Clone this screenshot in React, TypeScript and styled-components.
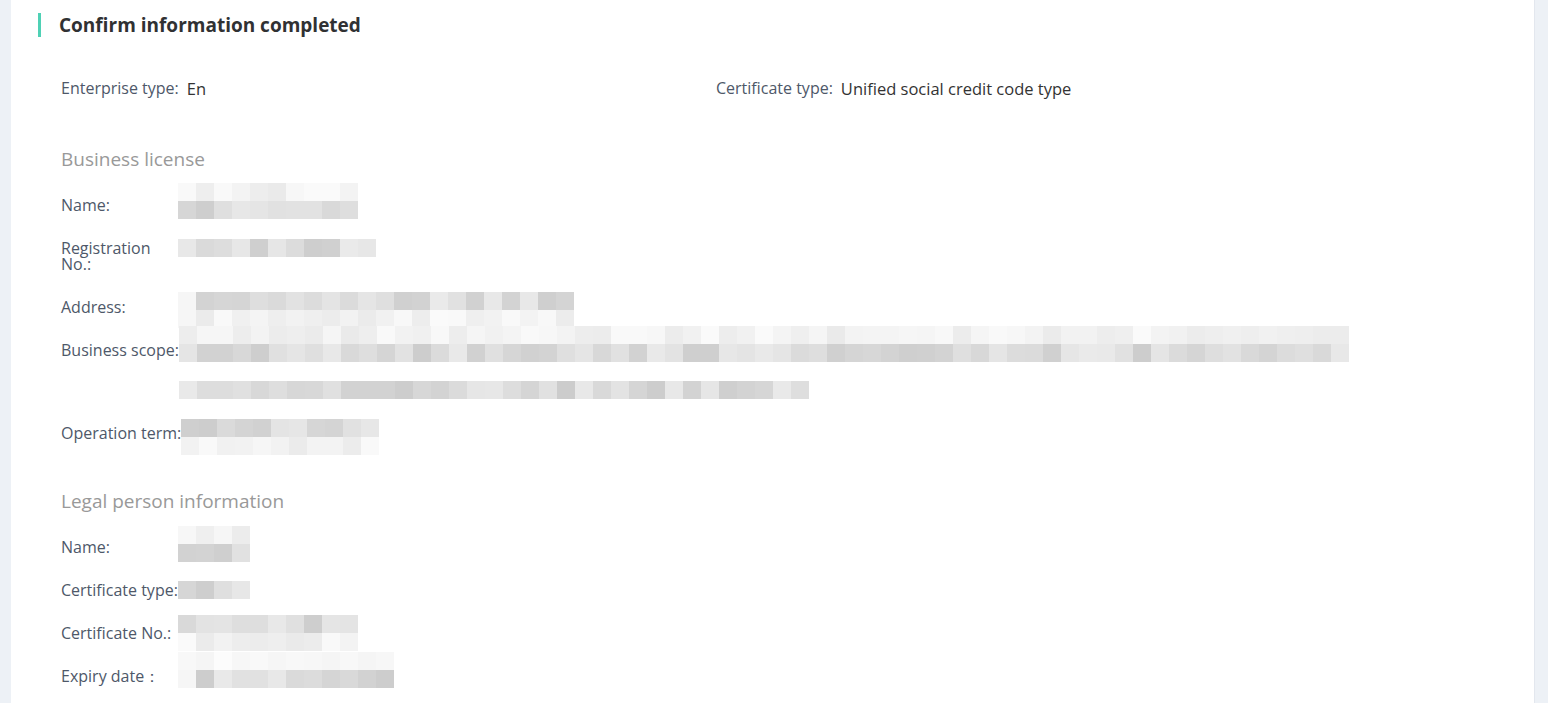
import React from "react";
import styled, { createGlobalStyle } from "styled-components";

const GlobalStyle = createGlobalStyle`
  html, body {
    margin: 0;
    padding: 0;
    background: #edf1f6;
    font-family: "Open Sans", "Noto Sans", Arial, sans-serif;
  }
`;

const Page = styled.div`
  min-height: 703px;
  padding: 0 13px 0 11px;
  box-sizing: border-box;
`;

const Card = styled.div`
  background: #fff;
  min-height: 703px;
  padding: 13px 50px 20px 27px;
  box-sizing: border-box;
  border-right: 1px solid #e3e7ee;
`;

const Title = styled.h2`
  margin: 0;
  display: flex;
  align-items: center;
  gap: 18px;
  font-size: 19px;
  line-height: 24px;
  font-weight: 700;
  color: #303133;
  &::before {
    content: "";
    width: 3px;
    height: 24px;
    background: #4fd1b5;
  }
`;

const Body = styled.div`
  padding-left: 23px;
`;

const TopGrid = styled.div`
  display: grid;
  grid-template-columns: 655px 1fr;
  margin-top: 43px;
`;

const Inline = styled.div`
  font-size: 16px;
  line-height: 17px;
  color: #4e5869;
  display: flex;
  gap: 8px;
`;

const InlineValue = styled.span`
  color: #333;
  font-size: 16.5px;
`;

const Section = styled.section<{ $gap: number }>`
  margin-top: ${(p) => p.$gap}px;
`;

const SectionTitle = styled.h3`
  margin: 0 0 26px;
  font-size: 19px;
  line-height: 24px;
  font-weight: 400;
  color: #999;
`;

const Fields = styled.div`
  display: flex;
  flex-direction: column;
  gap: 27px;
`;

const FieldRow = styled.div`
  display: flex;
  align-items: flex-start;
`;

const Label = styled.div<{ $wrap?: boolean }>`
  flex: 0 0 auto;
  min-width: 117px;
  max-width: ${(p) => (p.$wrap ? "117px" : "none")};
  white-space: ${(p) => (p.$wrap ? "normal" : "nowrap")};
  font-size: 16px;
  line-height: 16px;
  color: #4e5869;
`;

const ValueCol = styled.div`
  display: flex;
  flex-direction: column;
  gap: 24px;
`;

const Mosaic = styled.div<{ $cols: number; $rows: number; $shift: number }>`
  display: grid;
  grid-template-columns: repeat(${(p) => p.$cols}, 18px);
  grid-auto-rows: 18px;
  margin-top: ${(p) => -(p.$rows * 18 - 16) / 2 + p.$shift}px;
  margin-bottom: ${(p) => -(p.$rows * 18 - 16) / 2 - p.$shift}px;
`;

const Cell = styled.span<{ $g: number }>`
  background: rgb(${(p) => p.$g}, ${(p) => p.$g}, ${(p) => p.$g});
`;

type Blur = {
  cols: number;
  tones: [number, number][];
  seed: number;
  shift?: number;
  fade?: number;
};

type FieldData = { label: string; wrap?: boolean; lines: Blur[] };

const rand = (seed: number, i: number) => {
  const x = Math.sin(seed * 97.13 + i * 12.9898) * 43758.5453;
  return x - Math.floor(x);
};

const Pixelated = ({ cols, tones, seed, shift = 0, fade = 0 }: Blur) => {
  const cells: React.ReactNode[] = [];
  tones.forEach(([base, spread], r) => {
    for (let c = 0; c < cols; c++) {
      let g = Math.round(base + rand(seed + r * 7, c) * spread);
      if (c < fade) g = Math.max(g, 246);
      cells.push(<Cell key={`${r}-${c}`} $g={Math.min(g, 252)} />);
    }
  });
  return (
    <Mosaic $cols={cols} $rows={tones.length} $shift={shift}>
      {cells}
    </Mosaic>
  );
};

const Field = ({ label, wrap, lines }: FieldData) => (
  <FieldRow>
    <Label $wrap={wrap}>{label}</Label>
    <ValueCol>
      {lines.map((l, i) => (
        <Pixelated key={i} {...l} />
      ))}
    </ValueCol>
  </FieldRow>
);

const light: [number, number] = [234, 16];
const dark: [number, number] = [204, 30];

const business: FieldData[] = [
  { label: "Name:", lines: [{ cols: 10, tones: [light, dark], seed: 1, shift: -4 }] },
  {
    label: "Registration No.:",
    wrap: true,
    lines: [{ cols: 11, tones: [dark], seed: 2 }],
  },
  {
    label: "Address:",
    lines: [{ cols: 22, tones: [dark, light], seed: 3, shift: 3, fade: 1 }],
  },
  {
    label: "Business scope:",
    lines: [
      { cols: 65, tones: [light, dark], seed: 4, shift: -6 },
      { cols: 35, tones: [dark], seed: 5 },
    ],
  },
  {
    label: "Operation term:",
    lines: [{ cols: 11, tones: [dark, light], seed: 6, shift: 4 }],
  },
];

const legal: FieldData[] = [
  { label: "Name:", lines: [{ cols: 4, tones: [light, dark], seed: 7, shift: -3 }] },
  { label: "Certificate type:", lines: [{ cols: 4, tones: [dark], seed: 8 }] },
  {
    label: "Certificate No.:",
    lines: [{ cols: 10, tones: [dark, light], seed: 9 }],
  },
  {
    label: "Expiry date\uFF1A",
    lines: [{ cols: 12, tones: [[244, 8], dark], seed: 10, shift: -6, fade: 1 }],
  },
];

export default function App() {
  return (
    <>
      <GlobalStyle />
      <Page>
        <Card>
          <Title>Confirm information completed</Title>
          <Body>
            <TopGrid>
              <Inline>
                Enterprise type: <InlineValue>En</InlineValue>
              </Inline>
              <Inline>
                Certificate type:{" "}
                <InlineValue>Unified social credit code type</InlineValue>
              </Inline>
            </TopGrid>
            <Section $gap={50}>
              <SectionTitle>Business license</SectionTitle>
              <Fields>
                {business.map((f) => (
                  <Field key={f.label} {...f} />
                ))}
              </Fields>
            </Section>
            <Section $gap={48}>
              <SectionTitle>Legal person information</SectionTitle>
              <Fields>
                {legal.map((f) => (
                  <Field key={f.label} {...f} />
                ))}
              </Fields>
            </Section>
          </Body>
        </Card>
      </Page>
    </>
  );
}
